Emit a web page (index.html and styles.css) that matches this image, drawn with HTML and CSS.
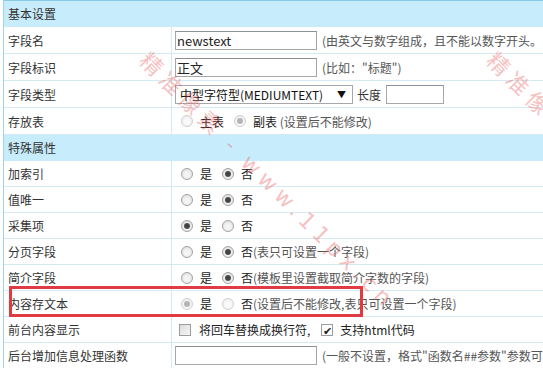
FILE: index.html
```html
<!DOCTYPE html>
<html lang="zh-CN">
<head>
    <meta charset="UTF-8">
    <title>字段设置</title>
    <link rel="stylesheet" href="styles.css">
</head>
<body>

<div class="page">
    <div class="panel">
        <div class="sec">基本设置</div>
        <div class="row tall">
            <div class="lbl">字段名</div>
            <div class="val">
                <input class="txt" type="text" value="newstext">
                <span class="hint">(由英文与数字组成，且不能以数字开头。</span>
            </div>
        </div>
        <div class="row tall">
            <div class="lbl">字段标识</div>
            <div class="val">
                <input class="txt" type="text" value="正文">
                <span class="hint">(比如："标题")</span>
            </div>
        </div>
        <div class="row tall">
            <div class="lbl">字段类型</div>
            <div class="val">
                <span class="sel">中型字符型(MEDIUMTEXT)<i>▼</i></span>
                <span class="len">长度</span>
                <input class="txt short" type="text" value="">
            </div>
        </div>
        <div class="row tall">
            <div class="lbl">存放表</div>
            <div class="val">
                <span class="rd dis"></span><span class="opt">主表</span>
                <span class="rd dis on"></span><span class="opt">副表 <em class="hint">(设置后不能修改)</em></span>
            </div>
        </div>

        <div class="sec">特殊属性</div>
        <div class="row">
            <div class="lbl">加索引</div>
            <div class="val">
                <span class="rd"></span><span class="opt">是</span>
                <span class="rd on"></span><span class="opt">否</span>
            </div>
        </div>
        <div class="row">
            <div class="lbl">值唯一</div>
            <div class="val">
                <span class="rd"></span><span class="opt">是</span>
                <span class="rd on"></span><span class="opt">否</span>
            </div>
        </div>
        <div class="row">
            <div class="lbl">采集项</div>
            <div class="val">
                <span class="rd on"></span><span class="opt">是</span>
                <span class="rd"></span><span class="opt">否</span>
            </div>
        </div>
        <div class="row">
            <div class="lbl">分页字段</div>
            <div class="val">
                <span class="rd"></span><span class="opt">是</span>
                <span class="rd on"></span><span class="opt">否<em class="hint">(表只可设置一个字段)</em></span>
            </div>
        </div>
        <div class="row">
            <div class="lbl">简介字段</div>
            <div class="val">
                <span class="rd"></span><span class="opt">是</span>
                <span class="rd on"></span><span class="opt">否<em class="hint">(模板里设置截取简介字数的字段)</em></span>
            </div>
        </div>
        <div class="row">
            <div class="lbl">内容存文本</div>
            <div class="val">
                <span class="rd dis on"></span><span class="opt">是</span>
                <span class="rd dis"></span><span class="opt">否<em class="hint">(设置后不能修改,表只可设置一个字段)</em></span>
            </div>
        </div>
        <div class="row">
            <div class="lbl">前台内容显示</div>
            <div class="val">
                <span class="cb"></span><span class="opt">将回车替换成换行符,</span>
                <span class="cb on">✔</span><span class="opt">支持html代码</span>
            </div>
        </div>
        <div class="row">
            <div class="lbl">后台增加信息处理函数</div>
            <div class="val">
                <input class="txt" type="text" value="">
                <span class="hint">(一般不设置，格式"函数名##参数"参数可</span>
            </div>
        </div>
    </div>

    <!-- watermark + highlight box sit over the form -->
    <div class="mark">精准像素 - <span class="url">www.11px.cn</span></div>
    <div class="mark mark-2">精准像素 - <span class="url">www.11px.cn</span></div>
    <div class="hl"></div>
</div>

</body>
</html>
```

FILE: styles.css
```css
body {
    margin: 0;
    padding: 0;
    background-color: #fff;
    font-family: "Noto Sans CJK SC", "Noto Sans", sans-serif;
    font-size: 12px;
    color: #333;
    overflow: hidden;
}
.page {
    position: relative;
    width: 543px;
    height: 368px;
    overflow: hidden;
}
.panel {
    margin-left: 3px;
    width: 720px;
    border-top: 1px solid #86c9e3;
    border-left: 1px solid #9fd3e8;
}
.sec {
    height: 26px;
    line-height: 26px;
    padding-left: 4px;
    background-color: #c7ecfb;
    color: #333;
}
.row {
    display: flex;
    height: 26px;
    box-sizing: border-box;
    border-bottom: 1px solid #d4eaf2;
}
.row.tall {
    height: 27px;
}
.lbl {
    width: 163px;
    padding-left: 4px;
    border-right: 1px solid #d4eaf2;
    display: flex;
    align-items: center;
    white-space: nowrap;
}
.val {
    flex: 1;
    padding-left: 3px;
    display: flex;
    align-items: center;
    white-space: nowrap;
}
.txt {
    width: 142px;
    height: 19px;
    box-sizing: border-box;
    margin: 0;
    padding: 0 1px;
    border: 1px solid #a5a7ab;
    border-top-color: #8d9094;
    font-family: "Noto Sans CJK SC", "Noto Sans", sans-serif;
    font-size: 13px;
    color: #222;
    outline: none;
}
.txt.short {
    width: 58px;
}
.hint {
    margin-left: 5px;
    color: #555;
    font-style: normal;
}
.opt .hint {
    margin-left: 0;
}
.sel {
    position: relative;
    width: 178px;
    height: 19px;
    box-sizing: border-box;
    padding-left: 4px;
    border: 1px solid #a5a7ab;
    line-height: 17px;
    font-size: 12px;
    color: #111;
}
.sel i {
    position: absolute;
    right: 6px;
    top: 0;
    font-style: normal;
    font-size: 9px;
}
.len {
    margin: 0 5px 0 4px;
}
.opt {
    margin-right: 4px;
    color: #222;
}
.rd {
    position: relative;
    width: 12px;
    height: 12px;
    box-sizing: border-box;
    margin: 0 7px 0 6px;
    border-radius: 50%;
    border: 1px solid #a3a3a3;
    background: radial-gradient(circle at 50% 60%, #f4f4f4 30%, #d9d9d9 100%);
}
.rd.on::after {
    content: "";
    position: absolute;
    left: 2px;
    top: 2px;
    width: 6px;
    height: 6px;
    border-radius: 50%;
    background: radial-gradient(circle, #444 40%, #6a6a6a 100%);
}
.rd.dis {
    border-color: #d0d0d0;
    background: radial-gradient(circle at 50% 60%, #fafafa 30%, #e8e8e8 100%);
}
.rd.dis.on::after {
    background: #b5b5b5;
}
.cb {
    width: 12px;
    height: 12px;
    box-sizing: border-box;
    margin: 0 8px 0 4px;
    border: 1px solid #9c9c9c;
    background: linear-gradient(135deg, #dcdcdc, #f6f6f6);
    font-size: 11px;
    line-height: 10px;
    text-align: center;
    color: #222;
}
.cb.on {
    margin: 0 7px 0 7px;
    background: #fff;
}
.mark {
    position: absolute;
    left: 145px;
    top: 39px;
    transform-origin: 0 50%;
    transform: rotate(45deg);
    font-family: "Noto Sans CJK SC", sans-serif;
    font-size: 22px;
    letter-spacing: 5.5px;
    color: rgba(232, 90, 90, 0.4);
    white-space: nowrap;
    pointer-events: none;
}
.mark .url {
    font-family: "DejaVu Sans", sans-serif;
}
.mark-2 {
    left: 492px;
}
.hl {
    position: absolute;
    left: 9px;
    top: 286px;
    width: 354px;
    height: 31px;
    box-sizing: border-box;
    border: 3px solid #e23a42;
    pointer-events: none;
}
```
